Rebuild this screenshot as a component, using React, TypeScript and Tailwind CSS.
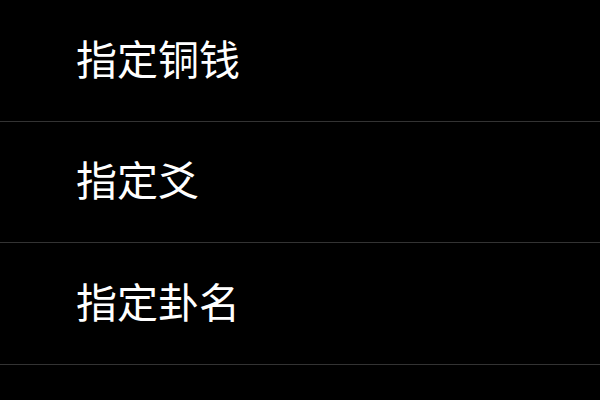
const items = ["指定铜钱", "指定爻", "指定卦名", ""];

export default function App() {
  return (
    <div className="w-[600px] h-[400px] overflow-hidden bg-black">
      {items.map((label, i) => (
        <div
          key={i}
          className="h-[121.5px] flex items-center pl-[76px] pb-[6px] border-b border-[#333333] text-white text-[41px] leading-none"
          style={{ fontFamily: '"Noto Sans CJK SC", "Noto Sans", sans-serif' }}
        >
          {label}
        </div>
      ))}
    </div>
  );
}
